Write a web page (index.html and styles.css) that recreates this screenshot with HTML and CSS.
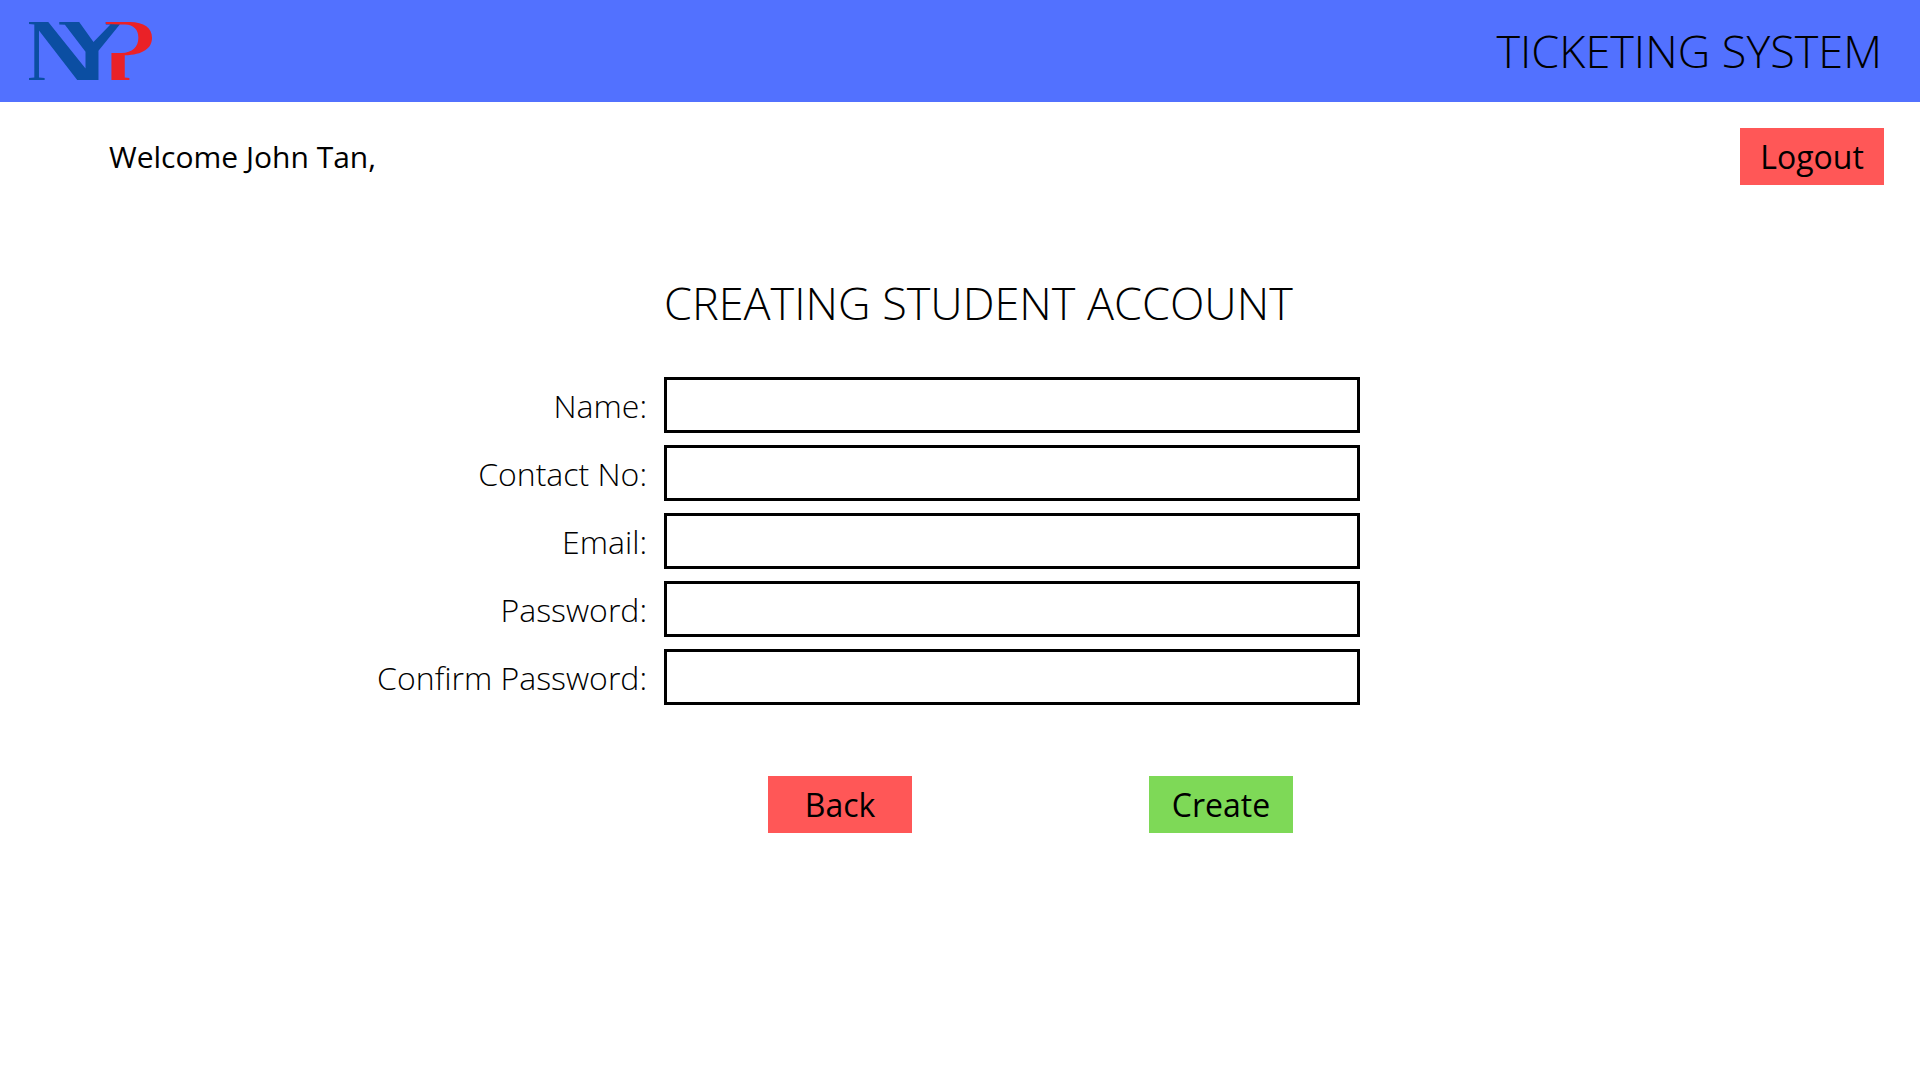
FILE: index.html
```html
<!DOCTYPE html>
<html lang="en">
<head>
<meta charset="utf-8">
<meta name="viewport" content="width=device-width, initial-scale=1">
<title>Ticketing System</title>
<link rel="stylesheet" href="styles.css">
</head>
<body>
<header class="banner">
  <svg class="logo" viewBox="27 36 370 174" role="img" aria-label="NYP">
    <g fill="#0b4ea2">
      <path d="M27 36H85L197 176V125L135 44L118 43V36H178L221 96L272 43H258V36H300V43L236 122V210H172L57 61V203L74 204V210H27V204L43 203V43L27 42Z"/>
    </g>
    <path fill="#ea2127" d="M258 36H330C374 37 397 54 397 83C397 115 370 134 315 136V203L329 204V210H275V129H305C338 128 356 110 356 83C356 58 342 44 316 43H300L258 42Z"/>
  </svg>
  <h1 class="title">TICKETING SYSTEM</h1>
</header>
<div class="userbar">
  <p class="welcome">Welcome John Tan,</p>
  <button class="button button-red" type="button">Logout</button>
</div>
<main>
  <form class="account">
    <h2 class="title heading">CREATING STUDENT ACCOUNT</h2>
    <label class="label" for="name">Name:</label>
    <input class="field" id="name" type="text">
    <label class="label" for="contact">Contact No:</label>
    <input class="field" id="contact" type="tel">
    <label class="label" for="email">Email:</label>
    <input class="field" id="email" type="email">
    <label class="label" for="password">Password:</label>
    <input class="field" id="password" type="password">
    <label class="label" for="confirm">Confirm Password:</label>
    <input class="field" id="confirm" type="password">
    <div class="actions">
      <button class="button button-red" type="button">Back</button>
      <button class="button button-green" type="submit">Create</button>
    </div>
  </form>
</main>
</body>
</html>
```
FILE: styles.css
```css
* {
  box-sizing: border-box;
}

body {
  margin: 0;
  background: #fff;
  color: #000;
  font-family: "Open Sans", "Noto Sans", sans-serif;
  font-size: 32px;
}

.banner {
  display: flex;
  align-items: center;
  justify-content: space-between;
  min-height: 102px;
  padding: 0 38px 0 29px;
  background: #5271ff;
}

.logo {
  width: 123px;
  height: 58px;
}

.title {
  margin: 0;
  font-size: 45px;
  font-weight: 300;
  line-height: 64px;
}

.userbar {
  display: flex;
  align-items: center;
  justify-content: space-between;
  padding: 26px 36px 0 109px;
}

.welcome {
  margin: 0;
  font-size: 30px;
}

.button {
  width: 144px;
  height: 57px;
  padding: 0;
  border: 0;
  color: #000;
  font: inherit;
  cursor: pointer;
}

.button-red {
  background: #ff5757;
}

.button-green {
  background: #7ed957;
}

.account {
  display: grid;
  grid-template-columns: 83fr 87fr 70fr;
  row-gap: 12px;
  align-items: center;
  padding-top: 86px;
}

.heading {
  grid-column: 2;
  margin-bottom: 30px;
  white-space: nowrap;
}

.label {
  grid-column: 1;
  padding-right: 17px;
  font-weight: 300;
  text-align: right;
}

.field {
  grid-column: 2;
  width: 100%;
  height: 56px;
  padding: 0 12px;
  border: 3px solid #000;
  border-radius: 0;
  background: #fff;
  font: inherit;
}

.actions {
  grid-column: 2;
  display: flex;
  justify-content: space-between;
  padding: 59px 67px 0 104px;
}
```
